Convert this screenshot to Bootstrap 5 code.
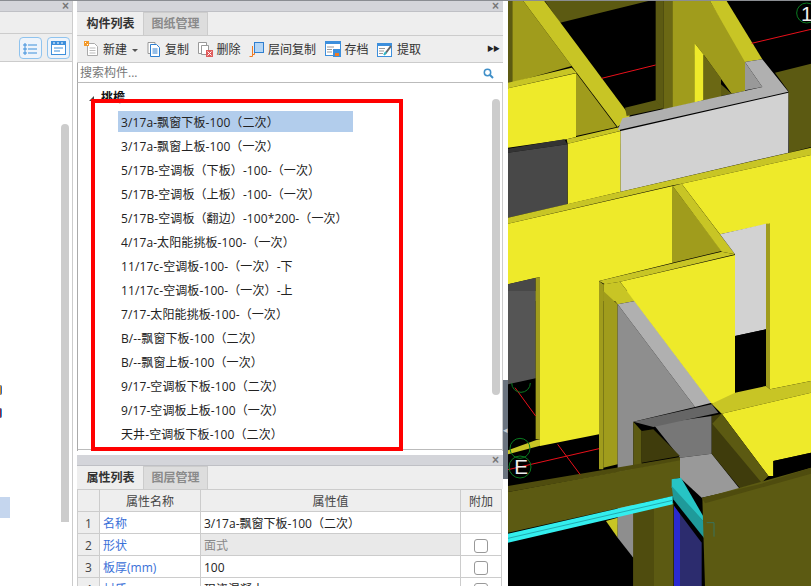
<!DOCTYPE html>
<html lang="zh-CN">
<head>
  <meta charset="UTF-8" />
  <title>构件列表</title>
  <meta name="viewport" content="width=device-width, initial-scale=1.0" />
  <link href="https://cdn.jsdelivr.net/npm/bootstrap@5.3.0/dist/css/bootstrap.min.css" rel="stylesheet" />
  <style>
    html, body { height: 586px; overflow: hidden; }
    body {
      font-family: "Open Sans", "Noto Sans CJK SC", sans-serif;
      font-size: 12px;
      color: #333;
      background: #fff;
    }
    .app-shell { width: 811px; height: 586px; border-top: 1px solid #8a8d92; }
    .left-pane { width: 73px; border-right: 1px solid #ccc; }
    .pane-gap { width: 4px; }
    .mid-pane { width: 426px; }
    .split-col { width: 5px; }
    .split-handle { height: 99px; margin-top: 379px; background: #6b7480; color: #c9ced4; font-size: 9px; line-height: 99px; text-align: center; }
    .view-3d { width: 303px; height: 585px; display: block; background: #000; }
    .pane-head { height: 11px; background: #d4d5da; border-bottom: 1px solid #bfc0c5; position: relative; }
    .pane-close { position: absolute; right: 4px; top: 0; font: bold 12px/10px "Liberation Sans", sans-serif; color: #777; }
    .left-pane .pane-close { right: 3px; }
    .left-tabs { height: 22px; background: #eee; border-bottom: 1px solid #ccc; }
    .left-tools { height: 28px; background: #eee; border-bottom: 1px solid #ccc; padding: 3px 2px 0 0; gap: 5px; }
    .view-btn { width: 23px; height: 22px; border: 1px solid #8fc3ee; border-radius: 4px; background: #eef4fb; display: flex; align-items: center; justify-content: center; }
    .left-body { height: 523px; padding-right: 3px; }
    .left-marks { width: 61px; padding-top: 323px; }
    .mark-a { width: 2px; height: 10px; background: #d98a20; border-right: 1px solid #2a6fd0; border-radius: 0 4px 4px 0; margin-bottom: 13px; }
    .mark-b { width: 2px; height: 10px; background: #9a2040; border-right: 1px solid #1e90e0; border-radius: 0 4px 4px 0; margin-bottom: 79px; }
    .mark-sel { width: 10px; height: 21px; background: #c5d6ee; }
    .left-scroll { width: 8px; height: 398px; margin-top: 62px; background: #ccc; border-radius: 4px 4px 0 0; }
    .mid-list { height: 449px; border-bottom: 1px solid #bbb; }
    .tab-strip { height: 24px; background: #eee; border-bottom: 1px solid #ccc; padding-left: 1px; }
    .tab-item { width: 65px; height: 23px; line-height: 24px; text-align: center; font-weight: 700; color: #333; }
    .tab-item.tab-off { background: #ddd; color: #8a8a8a; border: 1px solid #ccc; border-bottom: 0; line-height: 22px; }
    .tool-strip { height: 27px; background: #eee; border-bottom: 1px solid #ccc; padding: 2px 0 0 7px; position: relative; }
    .tool-item { gap: 4px; margin-right: 8.5px; color: #333; white-space: nowrap; }
    .tool-item svg { margin-top: -2px; }
    .tool-item.tool-drop { margin-right: 3px; }
    .tool-caret { width: 0; height: 0; border: 3px solid transparent; border-top: 3px solid #555; border-bottom: 0; margin-left: 2px; margin-right: 9px; }
    .tool-more { position: absolute; right: 4px; top: 3px; font-size: 7px; line-height: 20px; color: #222; letter-spacing: -1px; }
    .search-row { height: 20px; border-bottom: 1px solid #bbb; border-left: 1px solid #aaa; padding: 1px 9px 0 2px; color: #777; }
    .tree-area { height: 368px; border-left: 1px solid #aaa; border-right: 1px solid #ccc; position: relative; overflow: hidden; }
    .tree-root { padding: 6px 0 0 23px; height: 28px; line-height: 17px; font-weight: 700; color: #111; position: relative; }
    .tree-arrow { position: absolute; left: 11px; top: 13px; width: 0; height: 0; border-left: 5px solid transparent; border-bottom: 5px solid #444; }
    .tree-rows { padding-left: 40px; }
    .tree-row { height: 21px; line-height: 23px; margin-bottom: 3px; padding-left: 3px; width: 235px; color: #222; white-space: nowrap; letter-spacing: .1px; }
    .tree-row.row-on { background: #b2cdec; }
    .tree-thumb { position: absolute; left: 414px; top: 16px; width: 8px; height: 296px; background: #ccc; border-radius: 4px; }
    .red-frame { position: absolute; left: 91px; top: 99px; width: 312px; height: 352px; border: 4px solid #f00; pointer-events: none; }
    .attr-pane { margin-top: 5px; }
    .attr-tabs { height: 23px; background: #eee; padding-left: 1px; }
    .attr-table { width: 425px; table-layout: fixed; margin: 0; border-collapse: collapse; }
    .col-idx { width: 22px; }
    .col-name { width: 101px; }
    .col-val { width: 260px; }
    .col-add { width: 41px; }
    .attr-table th, .attr-table td { height: 21px; padding: 2px 3px 0; line-height: 19px; border: 1px solid #ccc; font-weight: 400; vertical-align: middle; overflow: hidden; white-space: nowrap; box-shadow: none; }
    .attr-table thead th { background: #eee; text-align: center; color: #444; }
    .attr-table td.idx-cell { background: #eee; text-align: center; color: #444; padding: 2px 0 0; }
    .attr-table td.name-cell { color: #3a70d8; }
    .attr-table td.val-cell { color: #222; }
    .attr-table td.val-off { background: #e9e9e9; color: #888; }
    .attr-check { width: 14px; height: 14px; margin: 1px auto 0; display: block; border: 1px solid #999; border-radius: 3px; background: #fff; }
  </style>
</head>
<body>
<div class="app-shell d-flex">
  <div class="left-pane flex-shrink-0">
    <div class="pane-head"><span class="pane-close">×</span></div>
    <div class="left-tabs"></div>
    <div class="left-tools d-flex justify-content-end">
      <div class="view-btn">
        <svg width="15" height="13" viewBox="0 0 15 13" fill="none" stroke="#3d8fdc"><path d="M1 2h2v2H1zM1 6h2v2H1zM1 10h2v2H1z" stroke-width="1"/><path d="M5 3h9M5 7h9M5 11h9" stroke-width="1.2"/></svg>
      </div>
      <div class="view-btn">
        <svg width="15" height="14" viewBox="0 0 15 14"><rect x="0" y="0" width="15" height="14" fill="#3d8fdc"/><rect x="1" y="4" width="13" height="9" fill="#fff"/><path d="M2 2h2M6 2h2M10 2h2" stroke="#fff"/><path d="M3 7h9M3 10h6" stroke="#3d8fdc" stroke-width="1.2"/></svg>
      </div>
    </div>
    <div class="left-body d-flex">
      <div class="left-marks">
        <div class="mark-a"></div>
        <div class="mark-b"></div>
        <div class="mark-sel"></div>
      </div>
      <div class="left-scroll"></div>
    </div>
  </div>
  <div class="pane-gap flex-shrink-0"></div>

  <div class="mid-pane flex-shrink-0">
    <div class="mid-list">
      <div class="pane-head"><span class="pane-close">×</span></div>
      <div class="tab-strip d-flex">
        <div class="tab-item">构件列表</div>
        <div class="tab-item tab-off">图纸管理</div>
      </div>
      <div class="tool-strip d-flex align-items-center">
        <div class="tool-item tool-drop d-flex align-items-center">
          <svg width="15" height="16" viewBox="0 0 15 16"><path d="M3.500 2.500h7l3 3v9h-10z" fill="#fff" stroke="#aaa"/><path d="M5.500 7h6M5.500 9.500h6M5.500 12h6" stroke="#bbb"/><rect x="0" y="0" width="5" height="5" fill="#f39a2b"/><path d="M1 1h1v1H1zM3 3h1v1H3z" fill="#fff"/></svg>
          新建
        </div>
        <div class="tool-caret"></div>
        <div class="tool-item d-flex align-items-center">
          <svg width="14" height="16" viewBox="0 0 14 16"><path d="M1 1.500h7v11H1z" fill="#fff" stroke="#999"/><path d="M3.500 3.500h6l3 3v9h-9z" fill="#fff" stroke="#2f7fd0"/><path d="M5.500 8h5M5.500 10h5M5.500 12h5" stroke="#2f7fd0"/></svg>
          复制
        </div>
        <div class="tool-item d-flex align-items-center">
          <svg width="15" height="16" viewBox="0 0 15 16"><path d="M.5 1.500h8v11h-8z" fill="#fff" stroke="#999"/><path d="M3.500 4.500h7v9h-7z" fill="#fff" stroke="#999"/><rect x="8" y="9" width="7" height="7" fill="#df5a5a"/><path d="M9.500 10.500l4 4M13.500 10.500l-4 4" stroke="#fff"/></svg>
          删除
        </div>
        <div class="tool-item d-flex align-items-center">
          <svg width="15" height="16" viewBox="0 0 15 16"><path d="M3.500 5v10.500H.5M5.500 8v5.500H3.500" fill="none" stroke="#f07a22"/><rect x="5.500" y="1.500" width="9" height="10" fill="#b5d6f5" stroke="#2f7fd0"/></svg>
          层间复制
        </div>
        <div class="tool-item d-flex align-items-center">
          <svg width="16" height="16" viewBox="0 0 16 16"><rect x=".5" y=".5" width="15" height="14" fill="#fff" stroke="#3d8fdc"/><rect x="0" y="0" width="16" height="3" fill="#3d8fdc"/><path d="M2 6h7M2 8.500h5M2 11h5" stroke="#999"/><rect x="8" y="8" width="8" height="8" fill="#3d8fdc"/><rect x="10" y="12" width="4" height="3" fill="#f07a22"/></svg>
          存档
        </div>
        <div class="tool-item d-flex align-items-center">
          <svg width="16" height="15" viewBox="0 0 16 15"><rect x=".5" y="1.500" width="14" height="13" fill="#fff" stroke="#3d8fdc"/><rect x="0" y="1" width="15" height="3" fill="#3d8fdc"/><path d="M2 6.500h6M2 9h5M2 11.500h4" stroke="#999"/><path d="M8 12l6-8" stroke="#666" stroke-width="2"/><path d="M7 13l2-3" stroke="#31b8c8" stroke-width="2"/></svg>
          提取
        </div>
        <div class="tool-more">▶▶</div>
      </div>
      <div class="search-row d-flex align-items-center justify-content-between">
        <span>搜索构件...</span>
        <svg width="11" height="11" viewBox="0 0 11 11" fill="none" stroke="#3f8fc8"><circle cx="4.500" cy="4.500" r="3.200" stroke-width="1.500"/><path d="M7 7l3 3" stroke-width="2"/></svg>
      </div>
      <div class="tree-area">
        <div class="tree-root"><span class="tree-arrow"></span>挑檐</div>
        <div class="tree-rows">
          <div class="tree-row row-on">3/17a-飘窗下板-100（二次）</div>
          <div class="tree-row">3/17a-飘窗上板-100（一次）</div>
          <div class="tree-row">5/17B-空调板（下板）-100-（一次）</div>
          <div class="tree-row">5/17B-空调板（上板）-100-（一次）</div>
          <div class="tree-row">5/17B-空调板（翻边）-100*200-（一次）</div>
          <div class="tree-row">4/17a-太阳能挑板-100-（一次）</div>
          <div class="tree-row">11/17c-空调板-100-（一次）-下</div>
          <div class="tree-row">11/17c-空调板-100-（一次）-上</div>
          <div class="tree-row">7/17-太阳能挑板-100-（一次）</div>
          <div class="tree-row">B/--飘窗下板-100（二次）</div>
          <div class="tree-row">B/--飘窗上板-100（一次）</div>
          <div class="tree-row">9/17-空调板下板-100（二次）</div>
          <div class="tree-row">9/17-空调板上板-100（一次）</div>
          <div class="tree-row">天井-空调板下板-100（二次）</div>
        </div>
        <div class="tree-thumb"></div>
      </div>
    </div>
    <div class="attr-pane">
      <div class="pane-head"><span class="pane-close">×</span></div>
      <div class="attr-tabs d-flex">
        <div class="tab-item">属性列表</div>
        <div class="tab-item tab-off">图层管理</div>
      </div>
      <table class="table attr-table">
        <colgroup><col class="col-idx"><col class="col-name"><col class="col-val"><col class="col-add"></colgroup>
        <thead><tr><th></th><th>属性名称</th><th>属性值</th><th>附加</th></tr></thead>
        <tbody>
          <tr><td class="idx-cell">1</td><td class="name-cell">名称</td><td class="val-cell">3/17a-飘窗下板-100（二次）</td><td></td></tr>
          <tr><td class="idx-cell">2</td><td class="name-cell">形状</td><td class="val-cell val-off">面式</td><td><span class="attr-check"></span></td></tr>
          <tr><td class="idx-cell">3</td><td class="name-cell">板厚(mm)</td><td class="val-cell">100</td><td><span class="attr-check"></span></td></tr>
          <tr><td class="idx-cell">4</td><td class="name-cell">材质</td><td class="val-cell">现浇混凝土</td><td><span class="attr-check"></span></td></tr>
        </tbody>
      </table>
    </div>
  </div>

  <div class="split-col flex-shrink-0"><div class="split-handle">◂</div></div>

  <svg class="view-3d flex-shrink-0" viewBox="9 0 909 1755" xmlns="http://www.w3.org/2000/svg">
    <rect x="9" y="0" width="909" height="1755" fill="#000"/>
    <g>
      <polygon fill="#5c5a12" points="120,0 430,0 165,65"/>
      <polygon fill="#5c5a12" points="9,0 22,0 22,245 9,248"/>
      <polygon fill="#a09c1c" points="22,0 55,0 200,195 22,245"/>
      <polygon fill="#c8c525" points="55,0 118,0 375,345 338,378 200,195"/>
      <polygon fill="#c8c525" points="9,245 200,200 215,215 9,262"/>
      <polygon fill="#eeea2a" points="9,262 213,217 213,408 185,415 9,440"/>
      <polygon fill="#a09c1c" points="213,215 335,378 213,405"/>
      <polygon fill="#c8c525" points="185,415 345,378 345,390 188,428"/>
      <polygon fill="#eeea2a" points="188,428 347,390 347,572 188,610"/>
      <polygon fill="#333" points="9,443 178,415 187,430 9,455"/>
      <polygon fill="#484848" points="9,455 187,430 187,610 9,650"/>
      <polygon fill="#5c5a12" points="360,320 452,298 475,322 365,345"/>
      <polygon fill="#5c5a12" points="452,0 475,0 475,325 452,300"/>
      <polygon fill="#6b6814" points="475,0 502,0 502,320 475,325"/>
      <polygon fill="#a09c1c" points="502,0 615,0 720,170 720,270 680,278 595,160 568,125 568,305 502,320"/>
      <polygon fill="#6b6814" points="595,160 648,232 648,290 595,298"/>
      <polygon fill="#5c5a12" points="648,250 680,278 648,285"/>
      <polygon fill="#eeea2a" points="568,125 595,160 595,298 568,305"/>
      <polygon fill="#c8c525" points="615,0 665,0 772,175 720,183"/>
      <polygon fill="#5c5a12" points="810,215 918,188 918,438 852,455 850,270"/>
      <polygon fill="#b0b0b0" points="720,183 772,175 850,272 338,388 352,352 772,258"/>
      <polygon fill="#999" points="720,183 772,258 720,268"/>
      <polygon fill="#d2d2d2" points="347,390 850,275 850,455 347,572"/>
      <polygon fill="#c8c525" points="9,650 347,572 918,440 918,462 530,548 505,553 9,668"/>
      <polygon fill="#eeea2a" points="9,668 503,555 503,785 282,840 282,900 105,900 105,828 9,850"/>
      <polygon fill="#eeea2a" points="530,548 918,462 918,900 795,900 795,668 645,700"/>
      <polygon fill="#a09c1c" points="503,555 650,750 503,785"/>
      <polygon fill="#c8c525" points="503,555 530,548 690,760 650,752"/>
      <polygon fill="#c8c525" points="282,840 650,752 690,760 345,842 300,850"/>
      <polygon fill="#eeea2a" points="345,842 690,762 690,900 390,900"/>
      <polygon fill="#d2d2d2" points="645,700 783,668 783,900 690,900 690,760"/>
      <polygon fill="#a09c1c" points="783,668 795,668 795,900 783,900"/>
      <polygon fill="#484848" points="9,850 92,830 92,900 9,900"/>
      <polygon fill="#a09c1c" points="92,830 105,828 105,900 92,900"/>
      <polygon fill="#c8c525" points="295,850 345,842 390,900 295,900"/>
      <polygon fill="#a09c1c" points="282,840 295,850 295,900 282,900"/>
      <path d="M290 232L452 192M740 127L918 85" stroke="#e8101a" stroke-width="3"/>
      <circle cx="905" cy="36" r="30" fill="none" stroke="#0a7a20" stroke-width="3"/>
      <text x="888" y="60" fill="#eee" font-family="Liberation Sans" font-size="62">1</text>
    </g>
    <g transform="translate(0,870)">
      <polygon fill="#555" points="9,0 92,0 92,262 9,280"/>
      <polygon fill="#a09c1c" points="92,0 105,0 105,445 92,445"/>
      <polygon fill="#eeea2a" points="105,0 282,0 282,430 105,465"/>
      <polygon fill="#c8c525" points="9,478 92,448 105,445 105,464 9,490"/>
      <polygon fill="#a09c1c" points="282,0 295,0 295,535 282,535"/>
      <polygon fill="#a09c1c" points="295,0 338,40 338,520 295,530"/>
      <polygon fill="#c8c525" points="305,0 365,0 390,30 338,40"/>
      <polygon fill="#8e8e8e" points="338,40 570,348 385,392 385,800 338,700"/>
      <polygon fill="#b0b0b0" points="338,40 390,30 620,335 570,348"/>
      <polygon fill="#eeea2a" points="365,0 690,0 690,322 620,338"/>
      <polygon fill="#d2d2d2" points="690,0 783,0 783,115 690,135"/>
      <polygon fill="#000" points="690,135 783,115 783,285 690,305"/>
      <polygon fill="#a09c1c" points="783,0 795,0 795,295 783,285"/>
      <polygon fill="#eeea2a" points="795,0 918,0 918,270 795,295"/>
      <polygon fill="#c8c525" points="620,338 690,305 783,285 795,295 918,270 918,305 650,368"/>
      <polygon fill="#eeea2a" points="650,368 918,305 918,485 805,510 805,555 790,555"/>
      <polygon fill="#777" points="445,400 620,375 620,488 525,500"/>
      <polygon fill="#666" points="385,392 620,340 640,365 445,408"/>
      <polygon fill="#999" points="525,500 620,488 705,595 590,620 525,560"/>
      <polygon fill="#3f3c0c" points="620,375 650,368 790,555 770,575 705,592 620,488"/>
      <polygon fill="#5c5a12" points="650,368 790,555 770,575 622,398"/>
      <polygon fill="#5c5a12" points="385,392 410,420 410,888 385,888"/>
      <polygon fill="#3f3c0c" points="410,420 445,415 525,495 410,515"/>
      <polygon fill="#4f4c0e" points="9,585 525,498 525,510 9,603"/>
      <polygon fill="#5c5a12" points="9,603 525,508 525,560 505,565 505,615 9,725"/>
      <polygon fill="#c8c525" points="303,690 338,680 338,740"/>
      <polygon fill="#8e8e8e" points="338,680 385,670 385,800 338,740"/>
      <polygon fill="#4f4c0e" points="385,660 505,635 505,888 385,888"/>
      <polygon fill="#5c5a12" points="447,650 505,635 505,888 447,888"/>
      <polygon fill="#33eeee" points="9,728 503,615 503,640 9,755"/>
      <path d="M9 742L503 628" stroke="#22aab0" stroke-width="3"/>
      <polygon fill="#27c4c4" points="500,565 528,560 603,690 603,700 500,590"/>
      <polygon fill="#1f9a9a" points="500,585 600,695 600,745 505,625"/>
      <polygon fill="#2c2c6e" points="507,645 590,755 590,888 507,888"/>
      <polygon fill="#2a2ad0" points="507,645 525,670 525,888 507,888"/>
      <polygon fill="#5c5a12" points="592,622 918,530 918,888 600,888"/>
      <polygon fill="#4f4c0e" points="590,620 770,578 918,530 918,548 600,637"/>
      <polygon fill="#000" points="805,510 918,485 918,528 805,555"/>
      <path d="M9 536L282 473M30 290L92 375M158 460L225 550" stroke="#e8101a" stroke-width="3" fill="none"/>
      <circle cx="45" cy="472" r="30" fill="none" stroke="#0a7a20" stroke-width="3"/>
      <circle cx="45" cy="528" r="33" fill="none" stroke="#0a7a20" stroke-width="3"/>
      <path d="M20 276a28 28 0 0 0 56 0" fill="none" stroke="#0a7a20" stroke-width="3"/>
      <text x="28" y="550" fill="#eee" font-family="Liberation Sans" font-size="62">E</text>
      <path d="M605 695h22v42" fill="none" stroke="#2a8080" stroke-width="2"/>
    </g>
  </svg>
</div>
<div class="red-frame"></div>
<script src="https://cdn.jsdelivr.net/npm/bootstrap@5.3.0/dist/js/bootstrap.bundle.min.js"></script>
</body>
</html>
